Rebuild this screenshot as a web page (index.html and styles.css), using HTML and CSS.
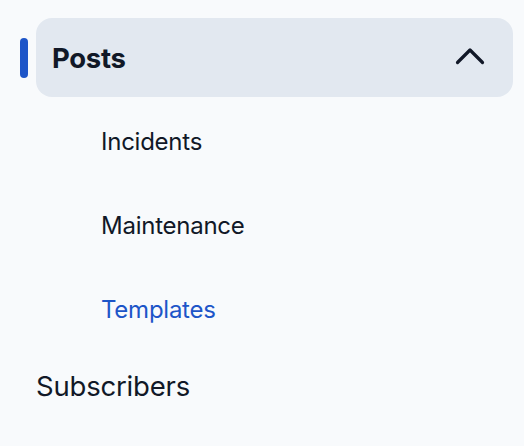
FILE: index.html
```html
<!DOCTYPE html>
<html lang="en">
<head>
<meta charset="utf-8">
<link rel="stylesheet" href="styles.css">
</head>
<body>
<nav class="nav">
  <div class="group">
    <span class="indicator"></span>
    <button class="group-head" type="button">
      <span class="group-title">Posts</span>
      <svg class="chevron" width="30" height="18" viewBox="0 0 30 18" aria-hidden="true">
        <path d="M2.5 15.5 L15 3 L27.5 15.5" fill="none" stroke="#111827" stroke-width="3.2" stroke-linecap="round" stroke-linejoin="round"/>
      </svg>
    </button>
  </div>
  <ul class="sub">
    <li class="sub-item">Incidents</li>
    <li class="sub-item">Maintenance</li>
    <li class="sub-item active">Templates</li>
  </ul>
  <div class="top-item">Subscribers</div>
</nav>
</body>
</html>
```
FILE: styles.css
```css
html, body {
  margin: 0;
  padding: 0;
  background: #f8fafc;
}
body {
  font-family: Inter, "Noto Sans", "Liberation Sans", sans-serif;
  color: #111827;
  width: 524px;
  height: 446px;
  overflow: hidden;
}
.nav {
  padding: 18px 11px 0 20px;
}
.group {
  display: flex;
  align-items: center;
  gap: 8px;
}
.indicator {
  width: 8px;
  height: 40px;
  border-radius: 4px;
  background: #1d55c8;
  flex: none;
}
.group-head {
  flex: 1;
  height: 79px;
  display: flex;
  align-items: center;
  justify-content: space-between;
  padding: 0 28px 0 16px;
  border: 0;
  border-radius: 16px;
  background: #e2e8f0;
  font: inherit;
  color: inherit;
}
.group-title {
  font-size: 27.5px;
  font-weight: 700;
  letter-spacing: -0.3px;
  margin-top: 1px;
}
.chevron {
  display: block;
  margin-top: -3px;
}
.sub {
  list-style: none;
  margin: 2px 0 0;
  padding: 0 0 0 81px;
}
.sub-item {
  height: 84px;
  display: flex;
  align-items: center;
  font-size: 24px;
  font-weight: 400;
  letter-spacing: -0.25px;
}
.sub-item.active {
  color: #1d55c8;
}
.top-item {
  padding-left: 16px;
  height: 70px;
  display: flex;
  align-items: center;
  font-size: 27.5px;
  letter-spacing: -0.2px;
}
```
